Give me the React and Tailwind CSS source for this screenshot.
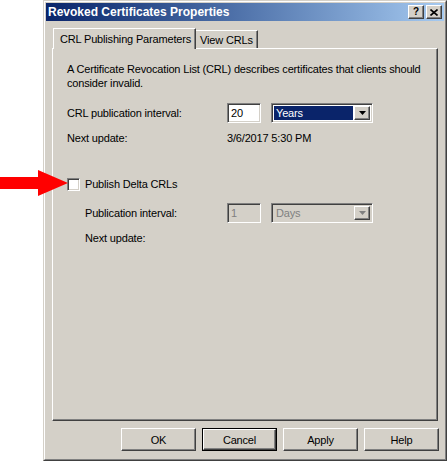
import React from 'react';

const raised = 'border-t border-l border-t-white border-l-white border-r border-b border-r-[#404040] border-b-[#404040] shadow-[inset_-1px_-1px_0_#808080]';
const sunken = 'border-t border-l border-t-[#808080] border-l-[#808080] border-r border-b border-r-white border-b-white shadow-[inset_1px_1px_0_#404040,inset_-1px_-1px_0_#d4d0c8]';

function Arrow() {
    return (
        <svg className="absolute left-0 top-[169px]" width="69" height="28" viewBox="0 0 69 28">
            <polygon points="0,8 38,8 38,1 68,14 38,27 38,20 0,20" fill="#ff0000" />
        </svg>
    );
}

function DropArrow({ disabled }) {
    return (
        <div className={`w-[16px] h-full bg-[#d4d0c8] flex items-center justify-center ${raised}`}>
            <svg width="7" height="4" viewBox="0 0 7 4">
                <polygon points="0,0 7,0 3.5,4" fill={disabled ? '#808080' : '#000'} />
            </svg>
        </div>
    );
}

function TextBox({ value, disabled }) {
    return (
        <div className={`w-[34px] h-[20px] px-[3px] flex items-center ${sunken} ${disabled ? 'bg-[#d4d0c8] text-[#808080]' : 'bg-white'}`}>
            {value}
        </div>
    );
}

function Combo({ value, disabled }) {
    return (
        <div className={`w-[102px] h-[20px] p-[2px] flex ${sunken} ${disabled ? 'bg-[#d4d0c8]' : 'bg-white'}`}>
            <div className={`flex-1 flex items-center px-[2px] mr-[1px] ${disabled ? 'text-[#808080]' : 'bg-[#0a246a] text-white'}`}>
                {value}
            </div>
            <DropArrow disabled={disabled} />
        </div>
    );
}

function Button({ label, isDefault }) {
    if (isDefault) {
        return (
            <div className="w-[75px] h-[23px] border border-black">
                <div className={`w-full h-full flex items-center justify-center ${raised}`}>{label}</div>
            </div>
        );
    }
    return (
        <div className={`w-[75px] h-[23px] flex items-center justify-center ${raised}`}>{label}</div>
    );
}

function TitleButton({ children }) {
    return (
        <div className={`w-[16px] h-[14px] bg-[#d4d0c8] flex items-center justify-center text-black ${raised}`}>
            {children}
        </div>
    );
}

export default function App() {
    return (
        <div className="relative w-[447px] h-[461px] bg-white overflow-hidden font-['Liberation_Sans',Arial,sans-serif] text-[11px] leading-[14px] tracking-[-0.17px] text-black">
            <div className="ml-[43px] w-[404px] h-[461px] bg-[#d4d0c8] border border-[#d4d0c8] border-r-[#404040] border-b-[#404040]">
                <div className="h-full border border-white border-r-[#808080] border-b-[#808080] p-[1px] flex flex-col">
                    {/* title bar */}
                    <div className="h-[18px] flex items-center pl-[2px] pr-[2px] bg-gradient-to-r from-[#0a246a] to-[#a6caf0]">
                        <span className="font-bold text-white text-[12px] tracking-normal flex-1">Revoked Certificates Properties</span>
                        <div className="flex gap-[2px]">
                            <TitleButton><span className="font-bold text-[10px] leading-none">?</span></TitleButton>
                            <TitleButton>
                                <svg width="8" height="7" viewBox="0 0 8 7">
                                    <path d="M0.5,0.5 L7.5,6.5 M7.5,0.5 L0.5,6.5" stroke="#000" strokeWidth="1.6" />
                                </svg>
                            </TitleButton>
                        </div>
                    </div>

                    {/* tabs */}
                    <div className="flex items-end ml-[7px] mt-[7px] h-[20px]">
                        <div className="relative z-10 h-[21px] mb-[-1px] pl-[6px] pr-[4px] pt-[3px] bg-[#d4d0c8] border-t border-l border-white border-r border-r-[#404040] shadow-[inset_-1px_0_0_#808080]">
                            CRL Publishing Parameters
                        </div>
                        <div className="h-[18px] pl-[4px] pr-[4px] pt-[2px] border-t border-white border-r border-r-[#404040] shadow-[inset_-1px_0_0_#808080]">
                            View CRLs
                        </div>
                    </div>

                    {/* panel */}
                    <div className={`ml-[6px] w-[386px] h-[373px] pl-[14px] pt-[13px] ${raised}`}>
                        <p>A Certificate Revocation List (CRL) describes certificates that clients should consider invalid.</p>

                        <div className="flex items-center mt-[13px]">
                            <span className="w-[160px]">CRL publication interval:</span>
                            <TextBox value="20" />
                            <div className="ml-[10px]">
                                <Combo value="Years" />
                            </div>
                        </div>
                        <div className="flex mt-[8px]">
                            <span className="w-[160px]">Next update:</span>
                            <span>3/6/2017 5:30 PM</span>
                        </div>

                        <div className="flex items-center mt-[32px]">
                            <div className={`w-[13px] h-[13px] bg-white ${sunken}`}></div>
                            <span className="ml-[5px]">Publish Delta CRLs</span>
                        </div>
                        <div className="flex items-center mt-[12px] pl-[18px]">
                            <span className="w-[142px]">Publication interval:</span>
                            <TextBox value="1" disabled />
                            <div className="ml-[10px]">
                                <Combo value="Days" disabled />
                            </div>
                        </div>
                        <div className="flex mt-[8px] pl-[18px]">
                            <span>Next update:</span>
                        </div>
                    </div>

                    {/* buttons */}
                    <div className="flex justify-end gap-[6px] pr-[5px] mt-[7px]">
                        <Button label="OK" />
                        <Button label="Cancel" isDefault />
                        <Button label="Apply" />
                        <Button label="Help" />
                    </div>
                </div>
            </div>
            <Arrow />
        </div>
    );
}
